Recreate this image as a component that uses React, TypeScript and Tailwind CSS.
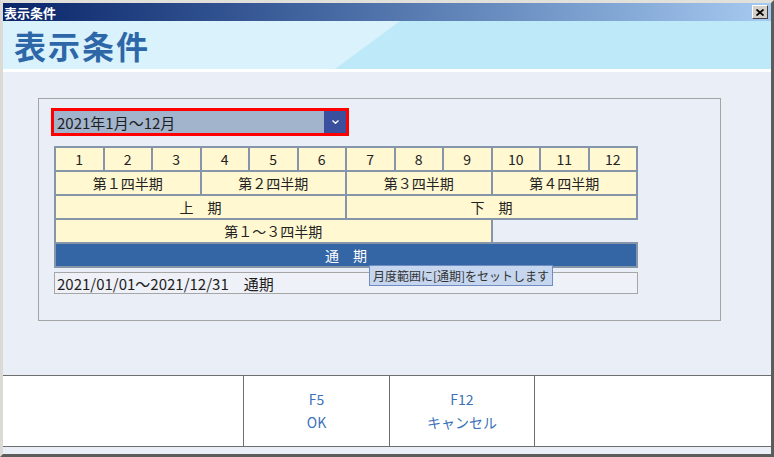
import React from "react";

const FONT = "font-['Meiryo_UI','Noto_Sans_CJK_JP','Noto_Sans',sans-serif]";

function Cell({ span, children, blue }: { span: string; children: React.ReactNode; blue?: boolean }) {
  return (
    <div
      className={`${span} h-[24px] border border-[#8595aa] outline outline-1 outline-[#8595aa] flex items-center justify-center text-[14px] leading-none ${
        blue ? "bg-[#3465a5] text-white" : "bg-[#fff8d0] text-[#222222]"
      }`}
    >
      {children}
    </div>
  );
}

export default function App() {
  const months = ["1", "2", "3", "4", "5", "6", "7", "8", "9", "10", "11", "12"];
  return (
    <div
      className={`w-[774px] h-[457px] overflow-hidden border-[3px] border-t-[#e2e0da] border-l-[#dcdad4] border-r-[#5c5c5c] border-b-[#5c5c5c] bg-[#eaeef6] flex flex-col ${FONT}`}
    >
      {/* title bar */}
      <div className="h-[18px] shrink-0 flex items-center justify-between bg-gradient-to-r from-[#0a246a] to-[#a6caf0] pl-[1px] pr-[3px]">
        <span className="text-white font-bold text-[13px] leading-none">表示条件</span>
        <div className="w-[16px] h-[14px] bg-[#d4d0c8] border border-t-white border-l-white border-r-[#404040] border-b-[#404040] flex items-center justify-center">
          <svg width="8" height="7" viewBox="0 0 8 7">
            <path d="M0.5 0.5 L7.5 6.5 M7.5 0.5 L0.5 6.5" stroke="#000" strokeWidth="1.7" />
          </svg>
        </div>
      </div>

      {/* header */}
      <div className="relative h-[48px] shrink-0 bg-[#daf2fc] overflow-hidden">
        <div className="absolute inset-0 bg-[#bee9f8] [clip-path:polygon(397px_0,100%_0,100%_100%,332px_100%)]" />
        <h1 className="relative pl-[11px] pt-[8px] text-[32px] font-bold text-[#2d67a8] leading-none tracking-[2px]">
          表示条件
        </h1>
      </div>
      <div className="h-[3px] shrink-0 bg-white" />

      {/* content */}
      <div className="h-[303px] shrink-0 pl-[35px] pt-[26px]">
        <div className="relative w-[683px] h-[223px] border border-[#a4a4a4] pl-[12px] pt-[9px]">
          {/* dropdown */}
          <div className="w-[298px] h-[28px] border-[3px] border-[#ff0000] bg-[#a2b4cb] flex items-center justify-between">
            <span className="pl-[3px] text-[15px] text-[#1e1e1e] leading-none">2021年1月～12月</span>
            <div className="w-[22px] h-[22px] bg-[#3b4f9f] flex items-center justify-center">
              <svg width="7" height="4" viewBox="0 0 7 4">
                <path d="M0.5 0.5 L3.5 3.3 L6.5 0.5" stroke="#fff" strokeWidth="1.3" fill="none" />
              </svg>
            </div>
          </div>

          {/* grid */}
          <div className="ml-[4px] mt-[11px] w-[582px] grid grid-cols-12">
            {months.map((m) => (
              <Cell key={m} span="col-span-1">
                {m}
              </Cell>
            ))}
            <Cell span="col-span-3">第１四半期</Cell>
            <Cell span="col-span-3">第２四半期</Cell>
            <Cell span="col-span-3">第３四半期</Cell>
            <Cell span="col-span-3">第４四半期</Cell>
            <Cell span="col-span-6">上　期</Cell>
            <Cell span="col-span-6">下　期</Cell>
            <Cell span="col-span-9">第１～３四半期</Cell>
            <div className="col-span-3" />
            <Cell span="col-span-12" blue>
              通　期
            </Cell>
          </div>

          {/* result */}
          <div className="ml-[3px] mt-[5px] w-[584px] h-[22px] border border-[#a6a6a6] bg-[#eef1f7] flex items-center pl-[2px] text-[15px] text-[#1e1e1e] leading-none">
            2021/01/01～2021/12/31　通期
          </div>

          {/* tooltip */}
          <div className="absolute left-[330px] top-[166px] h-[21px] px-[3px] bg-[#c5d6ee] border border-[#6f8cc3] flex items-center text-[12px] text-[#333333] leading-none whitespace-nowrap">
            月度範囲に[通期]をセットします
          </div>
        </div>
      </div>

      {/* footer */}
      <div className="h-[72px] shrink-0 border-y border-[#6e6e6e] bg-white flex">
        <div className="w-[240px]" />
        <div className="w-[146px] border-l border-[#6e6e6e] flex flex-col items-center justify-center text-[14px] leading-[23px] text-[#3b72b9]">
          <span>F5</span>
          <span>OK</span>
        </div>
        <div className="w-[145px] border-l border-[#6e6e6e] flex flex-col items-center justify-center text-[14px] leading-[23px] text-[#3b72b9]">
          <span>F12</span>
          <span>キャンセル</span>
        </div>
        <div className="flex-1 border-l border-[#6e6e6e]" />
      </div>
    </div>
  );
}
